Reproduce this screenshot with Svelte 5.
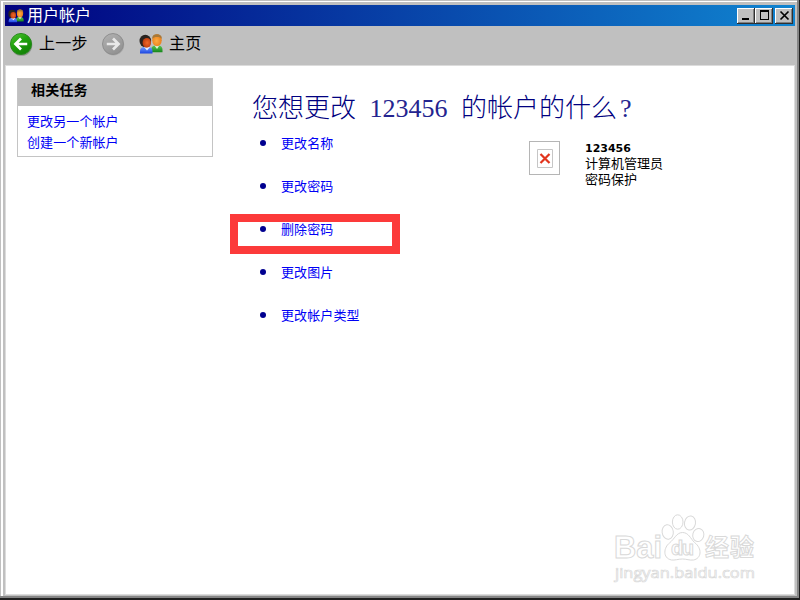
<script>
  const account = "123456";

  const tasks = ["更改另一个帐户", "创建一个新帐户"];

  const actions = [
    { label: "更改名称" },
    { label: "更改密码" },
    { label: "删除密码", marked: true },
    { label: "更改图片" },
    { label: "更改帐户类型" },
  ];
</script>

<svg class="hidden">
  <defs>
    <linearGradient id="blue" x1="0" y1="0" x2="0" y2="1">
      <stop offset="0" stop-color="#6f9bff" />
      <stop offset="1" stop-color="#1c45e0" />
    </linearGradient>
    <linearGradient id="green" x1="0" y1="0" x2="0" y2="1">
      <stop offset="0" stop-color="#5ac654" />
      <stop offset="1" stop-color="#16861b" />
    </linearGradient>
    <radialGradient id="skin" cx="0.45" cy="0.55" r="0.6">
      <stop offset="0" stop-color="#ffad42" />
      <stop offset="1" stop-color="#e67a18" />
    </radialGradient>
    <radialGradient id="dark-skin" cx="0.55" cy="0.5" r="0.6">
      <stop offset="0" stop-color="#f0682a" />
      <stop offset="1" stop-color="#b8380c" />
    </radialGradient>
    <linearGradient id="go" x1="0" y1="0" x2="0.6" y2="1">
      <stop offset="0" stop-color="#55c436" />
      <stop offset="0.5" stop-color="#1fa10d" />
      <stop offset="1" stop-color="#138306" />
    </linearGradient>
    <linearGradient id="idle" x1="0" y1="0" x2="0.6" y2="1">
      <stop offset="0" stop-color="#b3b3b3" />
      <stop offset="1" stop-color="#929292" />
    </linearGradient>
    <symbol id="users" viewBox="0 0 24 20">
      <path d="M12 18.200V16q0-4 4-4.500h4q3.500.5 3.500 4.500v2.200z" fill="url(#green)" />
      <path d="M15.500 11.500l2.500 3.500 2.300-3.500z" fill="#e4f5dc" />
      <ellipse cx="18" cy="6.300" rx="4.700" ry="6" fill="url(#skin)" />
      <path
        d="M13.300 5C13 1.500 15 .2 18 .2s5.200 1.500 4.800 4.800c-1-1.500-2.300-2-4.800-2s-3.700.5-4.700 2z"
        fill="#a87838"
      />
      <path d="M1 19.500V17q0-3.500 4-4h5q3.500.5 3.500 4v2.500z" fill="url(#blue)" />
      <path d="M5 13l3 3.500 3-3.500z" fill="#e9efff" />
      <ellipse cx="6.300" cy="7" rx="5.800" ry="6.200" fill="#292421" />
      <ellipse cx="7.800" cy="8.800" rx="4.200" ry="4.900" fill="url(#dark-skin)" />
    </symbol>
  </defs>
</svg>

<div class="window">
  <header class="titlebar">
    <svg class="title-icon"><use href="#users" /></svg>
    <h1>用户帐户</h1>
    <div class="controls">
      <button aria-label="最小化"
        ><svg viewBox="0 0 13 11"><path d="M2 9h7" stroke-width="2" /></svg></button
      >
      <button aria-label="最大化"
        ><svg viewBox="0 0 13 11"
          ><path d="M2 1.500h9M2.500 1v9M10.500 1v9M2 9.500h9M2 .5h9" /></svg
        ></button
      >
      <button class="close" aria-label="关闭"
        ><svg viewBox="0 0 13 11"
          ><path d="M2.500 1.500l8 8M10.500 1.500l-8 8" stroke-width="1.700" /></svg
        ></button
      >
    </div>
  </header>

  <nav class="toolbar">
    <button class="back">
      <svg class="arrow" viewBox="0 0 25 25">
        <circle cx="13" cy="13.500" r="11.300" fill="#8b9488" />
        <circle cx="12.500" cy="12.500" r="11" fill="url(#go)" stroke="#27891c" />
        <path
          d="M19 12.500H7.500M12.500 6.700L6.700 12.500l5.800 5.800"
          fill="none"
          stroke="#fff"
          stroke-width="2.800"
        />
      </svg>
      <span>上一步</span>
    </button>
    <button class="forward" aria-label="下一步">
      <svg class="arrow" viewBox="0 0 25 25">
        <circle cx="13" cy="13.300" r="11.200" fill="#aaa" />
        <circle cx="12.500" cy="12.500" r="10.900" fill="url(#idle)" stroke="#8c8c8c" />
        <path
          d="M6 12.500h11.500M12.500 6.700l5.800 5.800-5.800 5.800"
          fill="none"
          stroke="#e8e8e8"
          stroke-width="2.800"
        />
      </svg>
    </button>
    <button class="home">
      <svg class="home-icon"><use href="#users" /></svg>
      <span>主页</span>
    </button>
  </nav>

  <main>
    <aside>
      <h2>相关任务</h2>
      <ul>
        {#each tasks as task}
          <li><a href="#task">{task}</a></li>
        {/each}
      </ul>
    </aside>

    <section class="content">
      <h2>您想更改 <span>{account}</span> 的帐户的什么<span>?</span></h2>
      <div class="columns">
        <ul class="actions">
          {#each actions as action}
            <li class:marked={action.marked}><a href="#action">{action.label}</a></li>
          {/each}
        </ul>
        <div class="account">
          <div class="picture">
            <svg viewBox="0 0 16 19">
              <path d="M.5.500h15v18H.5z" fill="#fff" stroke="#c6c6c6" />
              <path d="M3.500 5l9 9M12.500 5l-9 9" stroke="#e2351d" stroke-width="2.200" />
            </svg>
          </div>
          <div class="details">
            <b>{account}</b>
            <span>计算机管理员</span>
            <span>密码保护</span>
          </div>
        </div>
      </div>
    </section>

    <svg class="watermark" viewBox="0 0 150 74">
      <g class="outline">
        <text x="2" y="46" class="logo" textLength="48" lengthAdjust="spacingAndGlyphs">Bai</text>
        <ellipse cx="55.700" cy="20" rx="5.600" ry="7.200" transform="rotate(-8 55.700 20)" />
        <ellipse cx="65.700" cy="10" rx="5.300" ry="7.200" />
        <ellipse cx="78" cy="11" rx="5.500" ry="7" transform="rotate(10 78 11)" />
        <ellipse cx="86.300" cy="23" rx="5.500" ry="6.600" transform="rotate(16 86.300 23)" />
        <path
          d="M70.500 20.500c6 0 8 6 12 10 8 6 7 16-1 17.500-4 .5-7-1-11-1s-8 1.500-11 1C50 46 52 35 57.500 31c5-4 7-10.500 13-10.500z"
        />
        <text x="59" y="43" class="du" textLength="23">du</text>
        <text x="93" y="44" class="jingyan" textLength="49">经验</text>
        <text
          x="3"
          y="66"
          class="domain"
          textLength="140"
          lengthAdjust="spacingAndGlyphs">jingyan.baidu.com</text
        >
      </g>
    </svg>
  </main>
</div>

<style>
  :global(body) {
    overflow: hidden;
  }

  .hidden {
    position: absolute;
    width: 0;
    height: 0;
  }

  .window {
    display: flex;
    flex-direction: column;
    box-sizing: border-box;
    width: 800px;
    height: 600px;
    padding: 5px;
    background: #c0c0c0;
    box-shadow:
      inset -1px -2px #202020,
      inset -3px -4px #858585,
      inset 1px 1px #c0c0c0,
      inset 3px 2px #fff;
    font-family: "Liberation Sans", "Noto Sans CJK SC", sans-serif;
    font-size: 13px;
    color: #000;
  }

  h1,
  h2,
  ul {
    margin: 0;
    padding: 0;
    font-weight: 400;
  }

  button {
    padding: 0;
    border: none;
    background: none;
    font: inherit;
    color: inherit;
  }

  a {
    color: #0000f5;
    letter-spacing: 0.1px;
    text-decoration: none;
  }

  .titlebar {
    display: flex;
    flex: none;
    align-items: center;
    height: 21px;
    padding: 0 2px 0 3px;
    background: linear-gradient(to right, #00007f, #1084d0);
    color: #fff;
  }

  .title-icon {
    width: 16px;
    height: 14px;
  }

  h1 {
    flex: 1;
    margin-left: 3px;
    font-size: 16px;
    line-height: 20px;
  }

  .controls {
    display: flex;
  }

  .controls button {
    display: flex;
    align-items: center;
    justify-content: center;
    width: 18px;
    height: 16px;
    background: #c0c0c0;
    box-shadow:
      inset -1px -1px #303030,
      inset 1px 1px #fff,
      inset -2px -2px #808080;
  }

  .controls .close {
    margin-left: 2px;
  }

  .controls svg {
    width: 13px;
    height: 11px;
    stroke: #000;
    fill: none;
  }

  .toolbar {
    display: flex;
    flex: none;
    align-items: center;
    height: 39px;
    padding: 0 0 4px 4px;
    box-sizing: border-box;
    font-size: 16px;
  }

  .toolbar button {
    display: flex;
    align-items: center;
  }

  .toolbar span {
    line-height: 20px;
    letter-spacing: 0.3px;
  }

  .arrow {
    width: 24px;
    height: 24px;
  }

  .back span {
    margin-left: 6px;
  }

  .forward {
    margin-left: 13px;
  }

  .home {
    margin-left: 14px;
  }

  .home-icon {
    width: 24px;
    height: 20px;
    margin-right: 6px;
  }

  main {
    position: relative;
    display: flex;
    flex: 1;
    border: 1px solid #dcdcdc;
    background: #fff;
  }

  aside {
    box-sizing: border-box;
    width: 196px;
    height: 79px;
    margin: 12px 0 0 11px;
    border: 1px solid #c4c4c4;
  }

  aside h2 {
    height: 27px;
    padding-left: 13px;
    background: #c0c0c0;
    font-size: 14px;
    font-weight: 700;
    line-height: 23px;
    letter-spacing: 0.2px;
  }

  aside ul {
    padding: 5px 0 0 9px;
    list-style: none;
  }

  aside li {
    height: 21px;
    line-height: 21px;
  }

  .content {
    margin: 23px 0 0 39px;
  }

  .content h2 {
    height: 37px;
    font-family: "Liberation Serif", "Noto Sans CJK SC", serif;
    font-size: 26px;
    font-weight: 300;
    line-height: 39px;
    word-spacing: 7px;
    color: #000080;
    white-space: nowrap;
  }

  .content h2 span {
    color: #24248f;
  }

  .content h2 span:last-child {
    margin-left: 3px;
  }

  .columns {
    display: flex;
  }

  .actions {
    width: 277px;
    padding-top: 8px;
    list-style: none;
  }

  .actions li {
    position: relative;
    display: flex;
    height: 20px;
    margin-bottom: 23px;
    line-height: 19px;
  }

  .actions li::before {
    content: "";
    width: 6px;
    height: 6px;
    margin: 6px 15px 0 8px;
    border-radius: 50%;
    background: #000090;
  }

  /* red frame round the entry to click */
  .marked::after {
    content: "";
    position: absolute;
    top: -6px;
    left: -22px;
    width: 154px;
    height: 24px;
    border: 8px solid #fc3a3a;
  }

  .account {
    display: flex;
    padding-top: 15px;
  }

  .picture {
    display: flex;
    align-items: center;
    justify-content: center;
    box-sizing: border-box;
    width: 31px;
    height: 34px;
    border: 1px solid #b5b5b5;
  }

  .picture svg {
    width: 16px;
    height: 19px;
  }

  .details {
    display: flex;
    flex-direction: column;
    margin-left: 25px;
    line-height: 16px;
  }

  .details b {
    font-family: "DejaVu Sans", sans-serif;
    font-size: 11px;
    line-height: 15px;
  }

  .watermark {
    position: absolute;
    right: 32px;
    bottom: 8px;
    width: 150px;
    height: 74px;
  }

  .outline {
    fill: #fff;
    stroke: #d9d9d9;
    stroke-width: 1;
  }

  .logo {
    font: 700 31px "Liberation Sans", sans-serif;
  }

  .du {
    font: 700 20px "Liberation Sans", sans-serif;
  }

  .jingyan {
    font: 700 24px "Noto Sans CJK SC", sans-serif;
  }

  .domain {
    font: 400 15px "Open Sans", sans-serif;
    stroke-width: 0.700;
  }
</style>
